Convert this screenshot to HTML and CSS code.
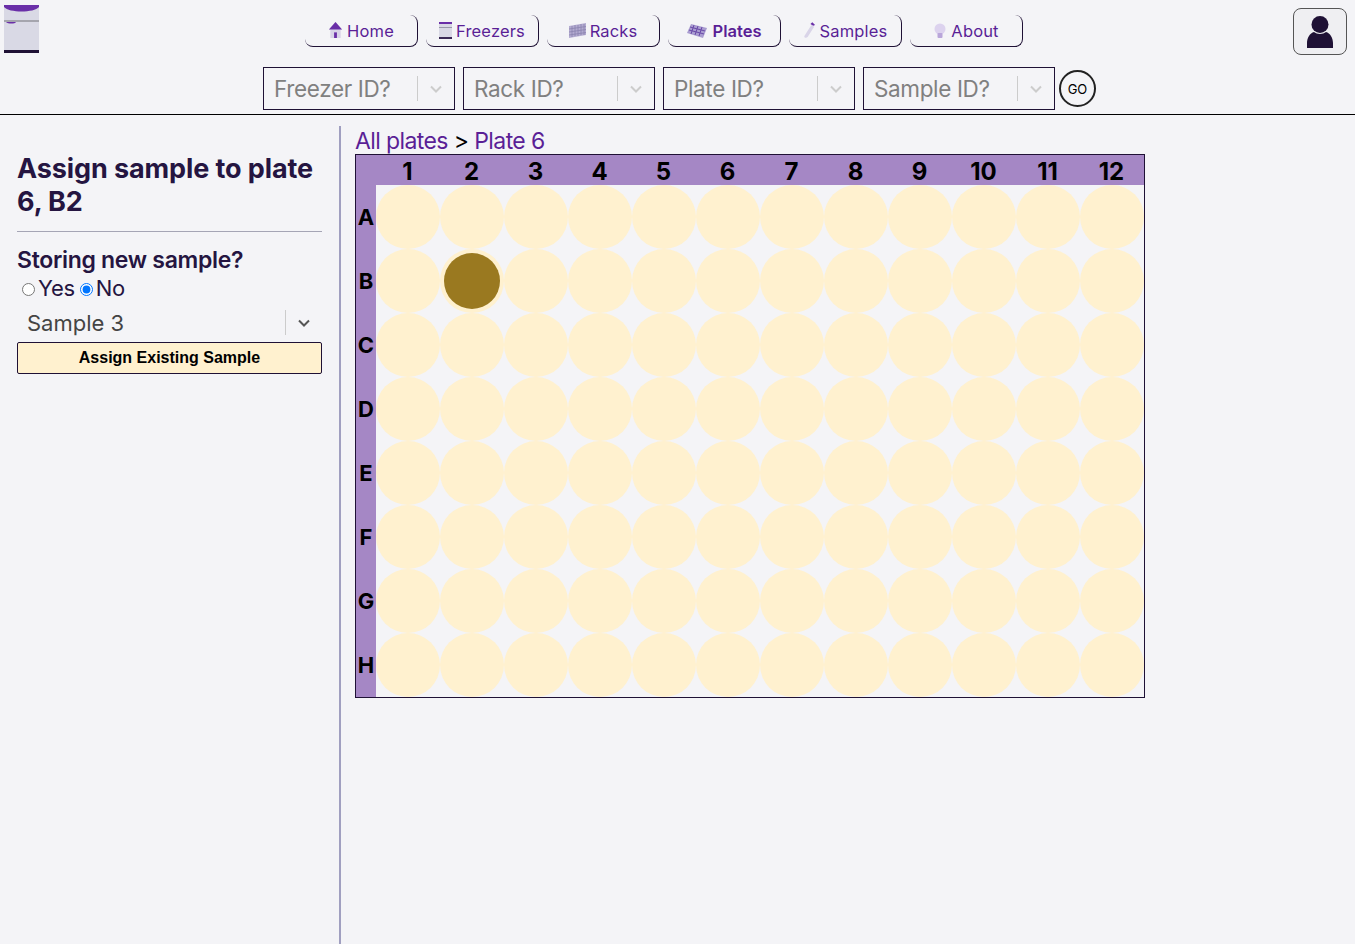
FILE: index.html
```html
<!DOCTYPE html>
<html lang="en">
<head>
    <meta charset="UTF-8">
    <meta name="viewport" content="width=device-width, initial-scale=1.0">
    <title>Plate 6</title>
    <link rel="stylesheet" href="styles.css">
</head>
<body>
    <header class="topbar">
        <svg class="logo" viewBox="0 0 35 48" width="35" height="48">
            <rect y="0" width="35" height="48" fill="#d9d9e5"/>
            <path d="M0 0H35V2C30 8 5 8 0 2Z" fill="#6a2fa8"/>
            <rect y="15" width="35" height="2" fill="#a5a5ae"/>
            <path d="M2 17H12C11 19 4 19 2 17Z" fill="#6a2fa8"/>
            <rect y="45" width="35" height="3" fill="#1f1135"/>
        </svg>
        <div class="topbar-middle">
            <nav class="nav">
                <a class="nav-btn" href="#">
                    <svg viewBox="0 0 16 18" width="15" height="17"><path d="M8 0L15 8H13.500V17H2.500V8H1Z" fill="#d9d4e8"/><path d="M8 0L15 8H1Z" fill="#6a2fa8"/><rect x="6.500" y="11" width="3" height="6" fill="#6a2fa8"/></svg>
                    Home
                </a>
                <a class="nav-btn" href="#">
                    <svg viewBox="0 0 13 17" width="13" height="17"><rect width="13" height="17" fill="#d9d9e5"/><rect width="13" height="2" fill="#6a2fa8"/><rect y="5" width="13" height="1" fill="#99a"/><rect y="15" width="13" height="2" fill="#3a2a55"/></svg>
                    Freezers
                </a>
                <a class="nav-btn" href="#">
                    <svg viewBox="0 0 17 15" width="17" height="15"><path d="M0 3L17 0V12L0 15Z" fill="#b3abd0"/><path d="M3 3V14M6 2V13M9 2V13M12 1V12M15 1V12M0 6L17 3.500M0 9L17 6.500M0 12L17 9.500" stroke="#8c84b0" stroke-width=".8"/></svg>
                    Racks
                </a>
                <a class="nav-btn nav-active" href="#">
                    <svg viewBox="0 0 20 14" width="20" height="14"><path d="M4 0L20 4L16 14L0 9Z" fill="#a99cd0"/><path d="M3 3L18 7M2 6L17 10M7 1L4 10M11 2L8 11M15 3L12 12" stroke="#6a4aa8" stroke-width="1"/></svg>
                    Plates
                </a>
                <a class="nav-btn" href="#">
                    <svg viewBox="0 0 14 18" width="13" height="17"><path d="M9 3L12 5L5 16C3 18 0 16 2 14Z" fill="#d9d4e8"/><path d="M8 2L10 0L13 3L11 4Z" fill="#6a2fa8"/></svg>
                    Samples
                </a>
                <a class="nav-btn" href="#">
                    <svg viewBox="0 0 14 16" width="14" height="16"><circle cx="7" cy="6" r="5.500" fill="#dcd2ee"/><rect x="4.500" y="10" width="5" height="5" rx="1" fill="#b9a6da"/></svg>
                    About
                </a>
            </nav>
            <form class="search">
                <div class="id-select"><span>Freezer ID?</span><i class="sep"></i><svg class="chev" viewBox="0 0 12 8" width="12" height="8"><path d="M1 1.500L6 6.500L11 1.500" fill="none" stroke="#ccc" stroke-width="2"/></svg></div>
                <div class="id-select"><span>Rack ID?</span><i class="sep"></i><svg class="chev" viewBox="0 0 12 8" width="12" height="8"><path d="M1 1.500L6 6.500L11 1.500" fill="none" stroke="#ccc" stroke-width="2"/></svg></div>
                <div class="id-select"><span>Plate ID?</span><i class="sep"></i><svg class="chev" viewBox="0 0 12 8" width="12" height="8"><path d="M1 1.500L6 6.500L11 1.500" fill="none" stroke="#ccc" stroke-width="2"/></svg></div>
                <div class="id-select"><span>Sample ID?</span><i class="sep"></i><svg class="chev" viewBox="0 0 12 8" width="12" height="8"><path d="M1 1.500L6 6.500L11 1.500" fill="none" stroke="#ccc" stroke-width="2"/></svg></div>
                <button class="go" type="button">GO</button>
            </form>
        </div>
        <button class="user" type="button">
            <svg viewBox="0 0 26 32" width="26" height="32"><circle cx="13" cy="8.500" r="8.500" fill="#1f1135"/><path d="M0 32V27C0 22 3 17 7 16C10 18.500 16 18.500 19 16C23 17 26 22 26 27V32Z" fill="#1f1135"/></svg>
        </button>
    </header>

    <main class="content">
        <aside class="sidebar">
            <h1>Assign sample to plate 6, B2</h1>
            <hr>
            <h2>Storing new sample?</h2>
            <div class="radios">
                <input type="radio" name="newsample" id="yes"><label for="yes">Yes</label>
                <input type="radio" name="newsample" id="no" checked><label for="no">No</label>
            </div>
            <div class="sample-select"><span>Sample 3</span><i class="sep"></i><svg class="chev" viewBox="0 0 12 8" width="12" height="8"><path d="M1 1.500L6 6.500L11 1.500" fill="none" stroke="#555" stroke-width="2"/></svg></div>
            <button class="assign" type="button">Assign Existing Sample</button>
        </aside>

        <section class="plate-area">
            <div class="crumbs"><a href="#">All plates</a> &gt; <a href="#">Plate 6</a></div>
            <div class="plate">
                <div class="head"></div><div class="head">1</div><div class="head">2</div><div class="head">3</div><div class="head">4</div><div class="head">5</div><div class="head">6</div><div class="head">7</div><div class="head">8</div><div class="head">9</div><div class="head">10</div><div class="head">11</div><div class="head">12</div>
                <div class="row-label">A</div><div class="well"></div><div class="well"></div><div class="well"></div><div class="well"></div><div class="well"></div><div class="well"></div><div class="well"></div><div class="well"></div><div class="well"></div><div class="well"></div><div class="well"></div><div class="well"></div>
                <div class="row-label">B</div><div class="well"></div><div class="well picked"></div><div class="well"></div><div class="well"></div><div class="well"></div><div class="well"></div><div class="well"></div><div class="well"></div><div class="well"></div><div class="well"></div><div class="well"></div><div class="well"></div>
                <div class="row-label">C</div><div class="well"></div><div class="well"></div><div class="well"></div><div class="well"></div><div class="well"></div><div class="well"></div><div class="well"></div><div class="well"></div><div class="well"></div><div class="well"></div><div class="well"></div><div class="well"></div>
                <div class="row-label">D</div><div class="well"></div><div class="well"></div><div class="well"></div><div class="well"></div><div class="well"></div><div class="well"></div><div class="well"></div><div class="well"></div><div class="well"></div><div class="well"></div><div class="well"></div><div class="well"></div>
                <div class="row-label">E</div><div class="well"></div><div class="well"></div><div class="well"></div><div class="well"></div><div class="well"></div><div class="well"></div><div class="well"></div><div class="well"></div><div class="well"></div><div class="well"></div><div class="well"></div><div class="well"></div>
                <div class="row-label">F</div><div class="well"></div><div class="well"></div><div class="well"></div><div class="well"></div><div class="well"></div><div class="well"></div><div class="well"></div><div class="well"></div><div class="well"></div><div class="well"></div><div class="well"></div><div class="well"></div>
                <div class="row-label">G</div><div class="well"></div><div class="well"></div><div class="well"></div><div class="well"></div><div class="well"></div><div class="well"></div><div class="well"></div><div class="well"></div><div class="well"></div><div class="well"></div><div class="well"></div><div class="well"></div>
                <div class="row-label">H</div><div class="well"></div><div class="well"></div><div class="well"></div><div class="well"></div><div class="well"></div><div class="well"></div><div class="well"></div><div class="well"></div><div class="well"></div><div class="well"></div><div class="well"></div><div class="well"></div>
            </div>
        </section>
    </main>
</body>
</html>
```

FILE: styles.css
```css
html, body {
    height: 100%;
}

body {
    margin: 0;
    background-color: #f4f4f7;
    color: #251541;
    font-family: Inter, 'Liberation Sans', sans-serif;
    display: flex;
    flex-direction: column;
    overflow: hidden;
}

/* Top bar */
.topbar {
    display: flex;
    height: 109px;
    flex: none;
    border-bottom: 1px solid #000;
    padding: 5px 8px 0 4px;
    box-sizing: content-box;
}

.logo {
    flex: none;
}

.topbar-middle {
    flex: 1;
    display: flex;
    flex-direction: column;
    align-items: center;
}

.nav {
    display: flex;
    gap: 8px;
    margin-top: 10px;
    margin-right: 4px;
}

.nav-btn {
    width: 113px;
    height: 32px;
    box-sizing: border-box;
    display: flex;
    align-items: center;
    justify-content: center;
    gap: 4px;
    border-right: 1px solid #1f1135;
    border-bottom: 1px solid #1f1135;
    border-radius: 8px;
    color: #5a1f96;
    font-size: 16.500px;
    letter-spacing: 0.150px;
    text-decoration: none;
}

.nav-active {
    font-weight: 600;
    gap: 6px;
    letter-spacing: 0;
}

.search {
    display: flex;
    align-items: center;
    gap: 8px;
    margin-top: 20px;
    margin-left: 27px;
}

.id-select {
    width: 192px;
    height: 43px;
    box-sizing: border-box;
    border: 1px solid #1f1135;
    display: flex;
    align-items: center;
    padding-left: 10px;
    color: #808080;
    font-size: 22.500px;
    letter-spacing: -0.360px;
}

.id-select span {
    flex: 1;
}

.sep {
    width: 1px;
    height: 25px;
    background-color: #ccc;
}

.chev {
    margin: 0 12px;
}

.go {
    width: 37px;
    height: 37px;
    margin-left: -4px;
    padding: 0;
    border: 2px solid #222;
    border-radius: 50%;
    background-color: #f4f4f7;
    color: #000;
    font-family: Inter, sans-serif;
    font-size: 13px;
    font-weight: 400;
}

.user {
    width: 54px;
    height: 47px;
    margin-top: 3px;
    padding: 0;
    border: 1px solid #555;
    border-radius: 8px;
    background-color: #efeff2;
    display: flex;
    align-items: center;
    justify-content: center;
}

/* Page body */
.content {
    flex: 1;
    display: flex;
    margin-top: 11px;
}

.sidebar {
    box-sizing: content-box;
    border-right: 2px solid #a09fc0;
    flex: none;
    padding: 0 17px;
    width: 305px;
}

.sidebar h1 {
    margin: 26px 0 13px;
    font-size: 27px;
    line-height: 33px;
    font-weight: 700;
    letter-spacing: -0.100px;
}

.sidebar hr {
    margin: 0;
    border: none;
    border-top: 1px solid #a5a5b5;
}

.sidebar h2 {
    margin: 14px 0 0;
    font-size: 23px;
    line-height: 28px;
    font-weight: 600;
    letter-spacing: -0.300px;
}

.radios {
    display: flex;
    align-items: center;
    height: 29px;
    margin-top: -1px;
    padding-left: 5px;
    font-size: 22px;
    letter-spacing: -0.300px;
}

.radios input {
    margin: 3px 3px 0 0;
    width: 13px;
    height: 13px;
}

.radios label {
    margin-right: 5px;
}

.sample-select {
    display: flex;
    align-items: center;
    height: 38px;
    margin-top: 1px;
    padding-left: 10px;
    padding-top: 1px;
    box-sizing: border-box;
    color: #444;
    font-size: 22px;
}

.sample-select span {
    flex: 1;
}

.sample-select .chev {
    margin: 0 12px;
}

.assign {
    display: block;
    width: 100%;
    height: 32px;
    margin-top: 1px;
    border: 1px solid #1f1135;
    border-radius: 2px;
    background-color: #fff1cf;
    color: #000;
    font-family: 'Liberation Sans', Arial, sans-serif;
    font-size: 16px;
    font-weight: 700;
}

.plate-area {
    padding-left: 14px;
}

.crumbs {
    margin-top: 2px;
    height: 26px;
    line-height: 26px;
    font-size: 23px;
    letter-spacing: -0.600px;
    color: #000;
}

.crumbs a {
    color: #5a1f96;
    text-decoration: none;
}

/* 96 well plate */
.plate {
    display: grid;
    grid-template-columns: 20px repeat(12, 64px);
    grid-template-rows: 30px repeat(8, 64px);
    border: 1px solid #1f1135;
    width: max-content;
}

.head, .row-label {
    background-color: #a587c5;
    color: #000;
    font-weight: 700;
    display: flex;
    align-items: center;
    justify-content: center;
}

.head {
    font-size: 24px;
    padding: 2px 1px 0 0;
}

.row-label {
    font-size: 22px;
}

.well {
    background-color: #fff1cf;
    border-radius: 50%;
    display: flex;
    align-items: center;
    justify-content: center;
}

.picked::after {
    content: "";
    width: 56px;
    height: 56px;
    border-radius: 50%;
    background-color: #9a7920;
}
```
